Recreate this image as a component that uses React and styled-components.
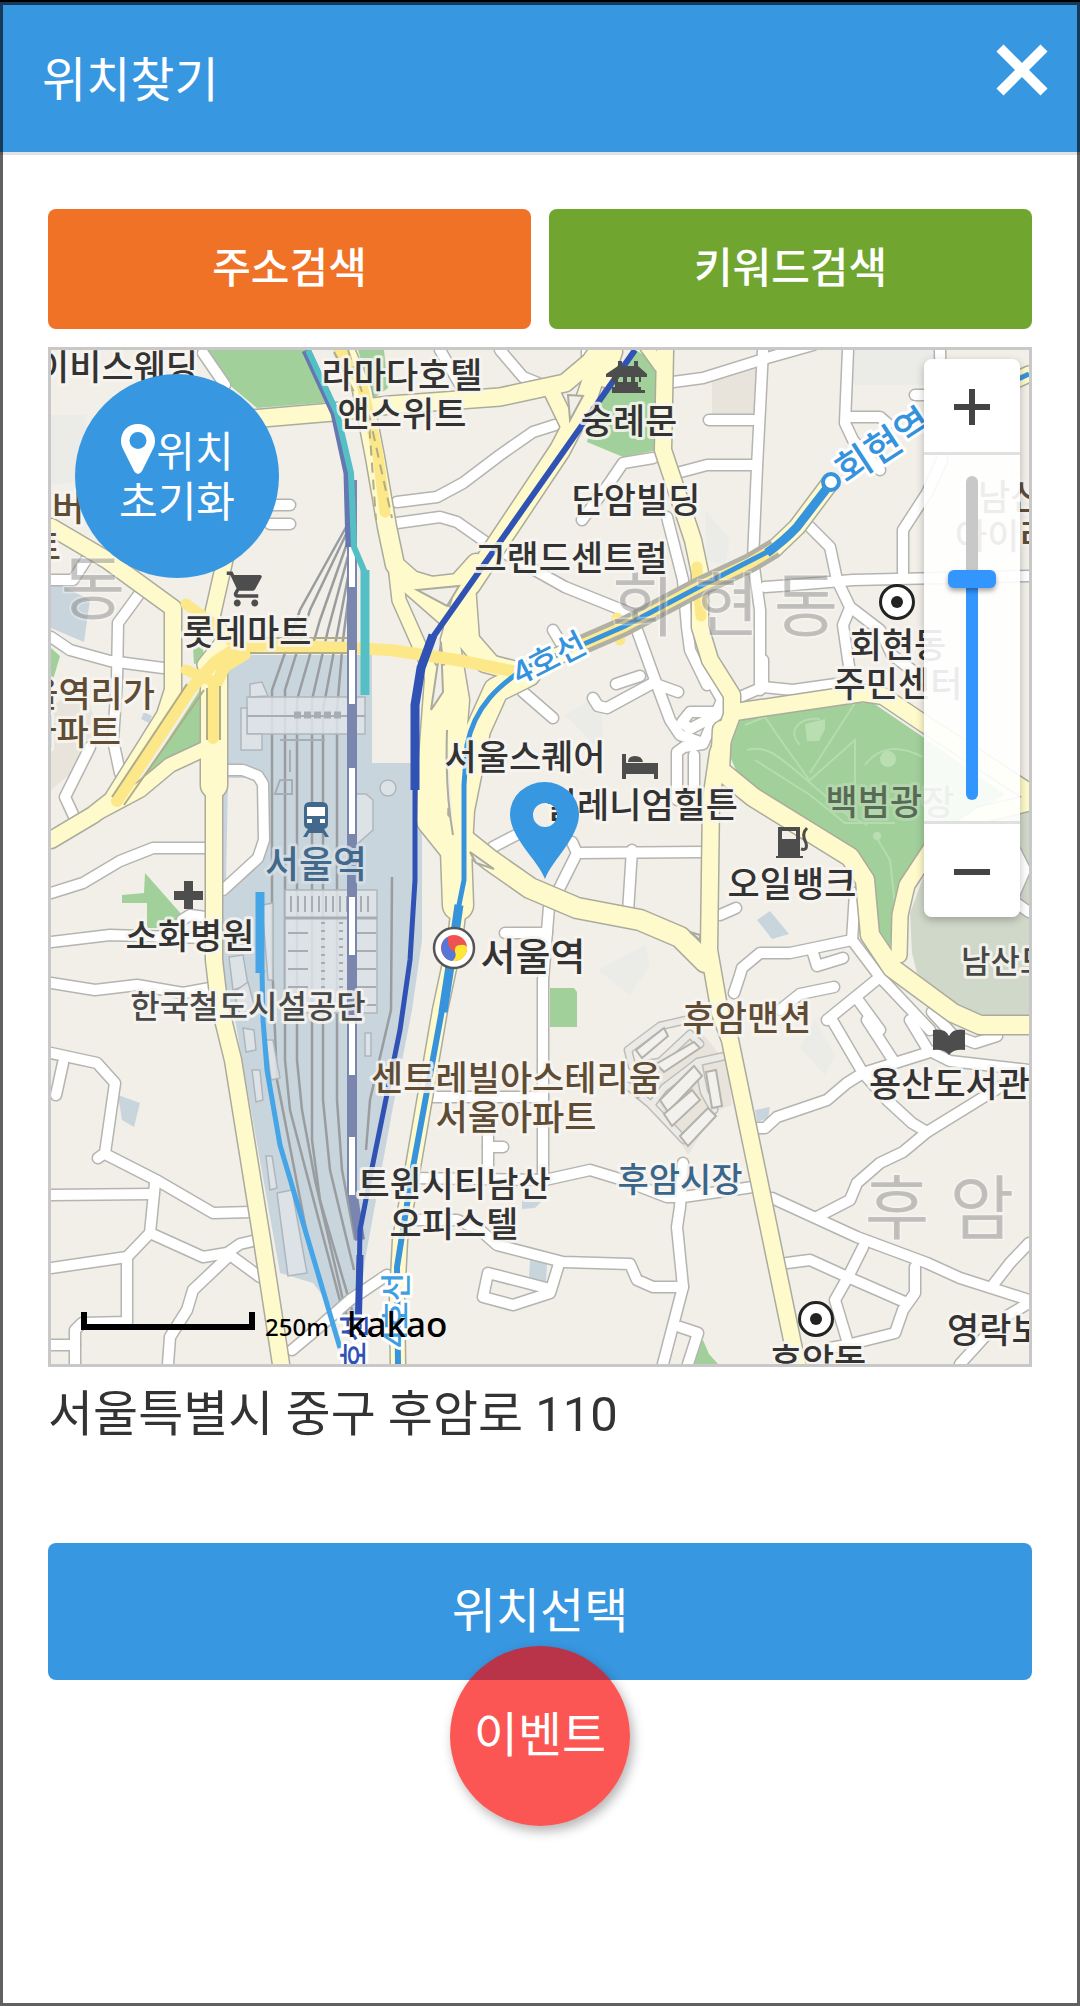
import React, { useState } from "react";
import styled, { createGlobalStyle } from "styled-components";
import { MdShoppingCart } from "react-icons/md";

const GlobalStyle = createGlobalStyle`
  *, *::before, *::after { box-sizing: border-box; }
  body { margin: 0; background: #fff; }
  body, button, input { font-family: Roboto, "Noto Sans CJK KR", sans-serif; }
`;

const Screen = styled.div`
  position: relative;
  min-height: 100vh;
  border-top: 2px solid #000;
  background: #fff;
  color: #333;

  &::after {
    content: "";
    position: absolute;
    inset: 0;
    border: 3px solid rgba(0, 0, 0, 0.62);
    pointer-events: none;
  }
`;

const Header = styled.header`
  display: flex;
  align-items: center;
  justify-content: space-between;
  height: 153px;
  padding: 0 28px 0 42px;
  border-bottom: 3px solid #e2e2e2;
  background: #3897e1;
  color: #fff;
`;

const Title = styled.h1`
  margin: 0;
  padding-top: 8px;
  font-size: 48px;
  line-height: 72px;
  font-weight: 400;
`;

const CloseButton = styled.button`
  display: flex;
  align-self: flex-start;
  margin-top: 38px;
  padding: 0;
  border: 0;
  background: none;
  color: inherit;
  cursor: pointer;
`;

const Content = styled.main`
  display: flex;
  flex-direction: column;
  padding: 54px 48px;
`;

const SearchRow = styled.div`
  display: grid;
  grid-template-columns: 1fr 1fr;
  gap: 18px;
  margin-bottom: 18px;
`;

const ActionButton = styled.button`
  height: ${(p) => (p.$large ? 137 : 120)}px;
  padding: 0 0 10px;
  border: 0;
  border-radius: 8px;
  background: ${(p) => p.$color};
  color: #fff;
  font-size: ${(p) => (p.$large ? 48 : 42)}px;
  font-weight: ${(p) => (p.$large ? 400 : 500)};
  cursor: pointer;
`;

const MapBox = styled.section`
  position: relative;
  overflow: hidden;
  border: 3px solid #c8c8c8;
  background: #f2efe9;
`;

const MapDrawing = styled.svg`
  display: block;
  width: 100%;
  height: auto;
  font-family: "Noto Sans CJK KR", sans-serif;
  font-weight: 500;
`;

const ResetButton = styled.button`
  position: absolute;
  top: 24px;
  left: 24px;
  width: 204px;
  height: 204px;
  padding: 4px 0 0;
  border: 0;
  border-radius: 50%;
  background: #3897e1;
  color: #fff;
  font-size: 42px;
  line-height: 50px;
  cursor: pointer;
`;

const ResetLine = styled.span`
  display: flex;
  align-items: center;
  justify-content: center;
`;

const PinIcon = styled.svg`
  margin: -8px 0 0;
`;

const ZoomPanel = styled.div`
  position: absolute;
  top: 9px;
  right: 9px;
  display: flex;
  flex-direction: column;
  width: 96px;
  border-radius: 8px;
  box-shadow: 0 3px 8px rgba(0, 0, 0, 0.25);
  overflow: hidden;
`;

const ZoomButton = styled.button`
  display: flex;
  align-items: center;
  justify-content: center;
  height: 93px;
  padding: 2px 0 0;
  border: 0;
  background: #fff;
  color: #444;
  cursor: pointer;
`;

const SliderArea = styled.div`
  display: flex;
  justify-content: center;
  padding: 21px 0;
  border: solid #e0e0e0;
  border-width: 3px 0;
  background: rgba(255, 255, 255, 0.9);
`;

const ZoomSlider = styled.input`
  appearance: none;
  writing-mode: vertical-lr;
  direction: rtl;
  width: 48px;
  height: 324px;
  margin: 0;
  background: none;

  &::-webkit-slider-runnable-track {
    width: 12px;
    border-radius: 6px;
    background: linear-gradient(#c8c8c8 ${(p) => p.$empty}%, #3396ff ${(p) => p.$empty}%);
  }

  &::-webkit-slider-thumb {
    appearance: none;
    width: 48px;
    height: 18px;
    margin-left: -18px;
    border-radius: 6px;
    background: #3396ff;
    box-shadow: 0 3px 5px rgba(0, 0, 0, 0.35);
  }
`;

const MapFooter = styled.div`
  position: absolute;
  left: 30px;
  bottom: 10px;
  display: flex;
  align-items: center;
  color: #000;
  font-family: "Noto Sans", sans-serif;
`;

const ScaleBar = styled.span`
  width: 174px;
  height: 18px;
  margin: 0 10px 12px 0;
  border: solid #000;
  border-width: 0 6px 6px;
`;

const ScaleText = styled.span`
  margin-right: 18px;
  font-size: 24px;
  line-height: 48px;
  font-weight: 500;
`;

const Brand = styled.span`
  padding-bottom: 6px;
  font-size: 35px;
  line-height: 48px;
  font-weight: 500;
`;

const Address = styled.p`
  margin: 12px 0 92px;
  font-size: 49px;
  line-height: 72px;
`;

const EventButton = styled.button`
  position: absolute;
  left: calc(50% - 90px);
  bottom: 180px;
  width: 180px;
  height: 180px;
  padding: 0 0 10px;
  border: 0;
  border-radius: 50%;
  background: rgba(249, 4, 0, 0.675);
  box-shadow: 3px 5px 12px rgba(0, 0, 0, 0.3);
  color: #fff;
  font-size: 48px;
  cursor: pointer;
`;

const INK = "#333333";
const BROWN = "#5f4c35";

const parks = [
  "205,350 305,350 333,402 257,408 227,383",
  "358,350 384,350 388,388 374,398 366,376",
  "635,350 650,358 656,374 657,450 623,457 587,442 597,404 607,380",
  "740,720 853,703 873,703 923,737 1005,795 953,823 923,853 897,897 890,947 877,927 875,893 863,870 853,857 753,787 736,770 728,752",
  "145,873 182,915 168,928 147,928 147,903 122,903 122,895 144,893",
  "200,690 200,747 165,765 140,783",
  "550,988 574,988 577,992 577,1027 550,1027",
  "703,1340 709,1354 718,1364 688,1364",
  "51,648 60,656 53,680 51,680",
  "193,648 203,646 204,662 194,664",
];

const streets = [
  "440,350 462,388", "500,350 523,377 545,386", "587,350 587,374",
  "555,425 533,432 500,455 463,483 437,497 397,502",
  "397,523 440,517 457,522 487,543 540,573 565,587 632,614",
  "673,382 703,378 767,358 813,345", "709,420 753,420", "677,473 707,465 753,465",
  "763,350 757,467 753,560 760,610 760,690",
  "653,458 623,463 608,485 582,520",
  "667,517 683,580 687,627 690,650 707,685", "637,630 654,677 670,720 680,735 703,743",
  "553,630 562,645", "593,698 598,706 607,708 653,683 678,692", "616,684 640,676",
  "523,692 553,718", "493,847 520,833", "557,893 577,853 702,852", "572,842 577,853",
  "632,850 628,912", "549,907 543,980 543,1173", "505,933 547,933",
  "677,800 677,752 684,747 703,744 722,700 706,672", "725,712 690,712 682,722 690,729 722,712",
  "694,795 694,755", "848,350 845,423 853,440 880,470", "850,417 880,417 888,424",
  "765,587 793,585 853,580 1029,576", "810,527 830,547 837,580 850,607 880,630 892,655 925,680",
  "903,573 903,530 927,493 942,460 940,350", "850,608 843,625 850,673 848,690",
  "915,395 930,395", "740,697 763,687 793,690 843,683", "763,687 763,660",
  "203,353 225,385", "273,505 290,505", "270,524 290,524",
  "51,580 73,580 88,557", "51,637 70,650 110,661 163,668", "140,593 118,623 117,680 113,740 120,773",
  "90,747 65,797 77,823", "227,770 243,770 258,776 263,784 264,840 258,858 223,890",
  "51,893 83,883 120,861 153,848 205,848", "51,942 110,935 205,938", "182,920 190,915 206,917",
  "51,983 95,990 137,985 183,993 210,988",
  "51,1053 97,1063 115,1083 105,1153 98,1158", "107,1155 158,1181 213,1213 252,1212",
  "63,1063 56,1095", "51,1195 153,1194", "155,1183 150,1233 127,1257 51,1268",
  "150,1233 203,1257 227,1253 240,1244 257,1240", "230,1255 260,1277",
  "230,1255 193,1290 187,1310 170,1337 168,1364", "127,1257 127,1322 82,1323 75,1330 75,1364",
  "51,1345 75,1345", "292,1350 310,1335 350,1300 387,1275",
  "433,1097 543,1097", "488,1130 488,1177", "488,1147 503,1147",
  "410,1178 545,1180 590,1170 623,1180 667,1197 683,1197 760,1186",
  "683,1163 680,1207 677,1227 683,1287 663,1364", "410,1220 457,1220 480,1230 497,1245 563,1262 630,1264 637,1280 653,1287 683,1287",
  "558,1267 550,1293 513,1305 483,1297 488,1273 550,1289", "680,1327 698,1333 688,1364",
  "832,1020 863,1073 847,1083 827,1100 777,1117 765,1128 758,1128", "863,1073 930,1052",
  "867,1020 893,1060", "910,1020 928,1050 950,1061 1029,1070", "932,1012 953,1035 975,1043 997,1036",
  "863,1073 887,1100 912,1123 927,1132", "1000,1087 927,1132 903,1152 880,1163 857,1183 850,1200 817,1217",
  "772,1198 857,1237 927,1263 960,1278 1029,1300", "993,1285 1010,1263 1029,1243",
  "863,1247 848,1277 835,1300 847,1340", "787,1263 810,1260 843,1275 907,1303",
  "915,1267 915,1293 903,1310 895,1333 847,1345 830,1348", "1029,1303 1000,1320 960,1364",
  "734,993 740,975 742,968 760,953 790,953 852,940 855,893", "813,953 817,966 843,958",
  "852,940 880,977 930,1030", "880,977 827,1020", "834,987 800,994 780,1010",
  "858,1000 880,1030", "1015,850 1025,870 1012,900 1029,912", "720,915 736,908",
];

const avenues = [
  { w: 16, d: "51,527 107,560 173,608 173,690 165,715 112,800 93,815 51,840" },
  { w: 14, d: "93,815 140,790 170,765 213,745" },
  { w: 15, d: "226,555 212,617 225,640 205,665" },
  { w: 26, d: "214,672 214,785" },
  { w: 16, d: "214,780 214,960 219,1003 233,1060 262,1240 281,1364" },
  { w: 17, d: "250,419 333,412 390,405 500,397 565,383 590,362 600,348" },
  { w: 18, d: "345,350 362,390 375,457 387,527 395,565 412,580 432,586 458,583 476,563" },
  { w: 15, d: "552,392 568,425" },
  { w: 20, d: "603,350 586,400 560,450 470,585" },
  { w: 14, d: "605,380 615,352" }, { w: 12, d: "645,345 660,366" },
  { w: 13, d: "395,565 399,600 430,670 440,720" },
  { w: 18, d: "466,585 450,640 460,700 452,800" },
  { w: 18, d: "410,585 450,620 485,663 520,672" },
  { w: 18, d: "466,585 470,640 490,663" },
  { w: 30, d: "440,680 434,760 432,820 456,850 458,905" },
  { w: 24, d: "528,674 496,690 478,730 462,810 458,880" },
  { w: 20, d: "455,832 490,860 530,888 577,908 640,920 680,937 705,962" },
  { w: 14, d: "462,880 455,940 440,1010 413,1167 400,1240 397,1300 398,1364" },
  { w: 16, d: "523,672 577,647 623,627 697,588 750,563 775,548 797,527 830,483" },
  { w: 15, d: "950,410 1029,374" },
  { w: 16, d: "665,350 663,450 673,480 693,540 700,573 700,627 710,660 732,695 732,715 718,753 711,800 709,950 720,1013 730,1040 797,1364" },
  { w: 16, d: "735,712 863,693 883,696 923,723 1029,792" },
  { w: 18, d: "722,730 720,770 753,797 850,857 865,880 870,935 892,968 953,1013 980,1025 1029,1025" },
  { w: 15, d: "899,955 900,915 907,885 930,850 980,815 1029,803" },
];

const ramps = [
  { w: 12, d: "117,801 190,690 215,662 235,649 260,645 350,648 390,650 457,660 517,672" },
  { w: 12, d: "213,738 213,690 225,666 245,654" },
  { w: 11, d: "186,604 215,625 230,640" },
  { w: 11, d: "186,670 210,680" },
  { w: 11, d: "340,350 362,385 378,455 385,512" },
  { w: 11, d: "697,567 698,588 701,616" },
  { w: 11, d: "617,618 620,640" },
];

const rails = [
  "350,520 300,610 272,690 272,960 277,1080 310,1250",
  "350,526 310,610 285,690 285,1060 290,1110 345,1320",
  "351,532 320,620 297,700 297,1060 302,1110 315,1180 350,1330",
  "351,545 328,630 312,700 312,1140 320,1200 352,1310",
  "352,556 336,640 323,710 323,1100 330,1170 354,1270",
  "352,570 343,640 337,710 337,1100 342,1170 355,1240",
  "392,877 391,1010 370,1100 366,1150",
];

const yardBuildings = [
  "247,697 365,697 365,734 247,734", "241,708 247,708 247,734 262,734 262,750 241,750",
  "250,684 262,682 268,696 250,697", "285,890 377,890 377,918 285,918",
  "285,918 377,918 377,1013 285,1013", "229,957 243,955 248,985 233,990",
  "234,992 248,982 256,1012 240,1016", "243,1028 254,1030 256,1050 246,1052",
  "252,1070 260,1070 263,1100 256,1102", "266,1040 273,1040 280,1078 271,1080",
  "266,1156 272,1156 277,1188 270,1190", "277,1193 292,1190 307,1273 288,1276",
  "355,794 366,794 373,800 373,830 355,846", "365,1033 371,1033 371,1056 365,1056",
  "262,905 273,903 273,980 268,980",
];

const apartments = [
  "636,1050 664,1028 668,1036 642,1058", "656,1064 694,1042 700,1048 664,1072",
  "660,1100 694,1066 702,1076 668,1112", "664,1114 692,1090 700,1100 672,1126",
  "680,1136 708,1108 716,1116 688,1146", "706,1072 716,1070 722,1106 712,1108",
  "632,1082 646,1072 650,1082 638,1098",
];

const apartmentLanes = [
  "628,1086 650,1104 684,1140 690,1134", "632,1066 628,1050 660,1026 686,1020",
  "632,1066 660,1062 690,1034 700,1044", "652,1104 664,1088 698,1062 725,1056",
  "698,1062 704,1092 714,1110",
];

const whiteTicks = [[547, 40], [650, 54], [768, 66], [897, 58], [1020, 55], [1137, 58]];

const labels = [
  { t: "이비스웨딩", x: 198, y: 380, a: "end" },
  { t: "라마다호텔", x: 402, y: 388 }, { t: "앤스위트", x: 402, y: 427 },
  { t: "숭례문", x: 629, y: 434 }, { t: "단암빌딩", x: 636, y: 513 },
  { t: "그랜드센트럴", x: 571, y: 571 }, { t: "롯데마트", x: 247, y: 645 },
  { t: "회현동", x: 898, y: 658 }, { t: "주민센터", x: 898, y: 697 },
  { t: "남산롯데캐슬", x: 978, y: 510, a: "start", c: BROWN },
  { t: "아이리스", x: 955, y: 549, a: "start", c: BROWN },
  { t: "버", x: 52, y: 521, a: "start", c: BROWN }, { t: "트", x: 61, y: 560, a: "end", c: BROWN },
  { t: "서울역리가", x: 155, y: 707, a: "end", c: BROWN }, { t: "아파트", x: 121, y: 745, a: "end", c: BROWN },
  { t: "백범광장", x: 890, y: 815, c: "#586a56", h: "#b7d9b0" },
  { t: "서울스퀘어", x: 525, y: 770 }, { t: "밀레니엄힐튼", x: 738, y: 818, a: "end" },
  { t: "오일뱅크", x: 792, y: 897 }, { t: "남산도서관", x: 961, y: 973, a: "start", c: "#484848", s: 32 },
  { t: "서울역", x: 316, y: 878, c: "#42698c", h: "#d8e0e6", s: 37 },
  { t: "소화병원", x: 190, y: 949 }, { t: "한국철도시설공단", x: 248, y: 1018, c: "#484848", s: 32 },
  { t: "서울역", x: 533, y: 970, s: 38 }, { t: "후암맨션", x: 747, y: 1031, c: BROWN },
  { t: "센트레빌아스테리움", x: 516, y: 1091, c: BROWN }, { t: "서울아파트", x: 516, y: 1130, c: BROWN },
  { t: "트윈시티남산", x: 454, y: 1197 }, { t: "오피스텔", x: 454, y: 1237 },
  { t: "후암시장", x: 680, y: 1192, c: "#39668a", s: 34 },
  { t: "용산도서관", x: 869, y: 1097, a: "start" }, { t: "후암동", x: 818, y: 1374 },
  { t: "영락보린원", x: 947, y: 1343, a: "start" },
];

const districts = [["동", 93, 614], ["회", 643, 631], ["현", 727, 631], ["동", 806, 631], ["후", 897, 1234], ["암", 982, 1234]];

const lineLabels = [
  { t: "4호선", x: 549, y: 658, r: -27, c: "#3592dc", s: 32 },
  { t: "회현역", x: 884, y: 447, r: -33, c: "#3592dc", s: 38 },
  { t: "4호선", x: 395, y: 1310, r: -90, c: "#3f9fe0", s: 31 },
  { t: "1호선", x: 353, y: 1350, r: -90, c: "#2f52b4", s: 30 },
];

function Roads({ items, edge, fill, width }) {
  const norm = items.map((r) => (typeof r === "string" ? { d: r, w: width } : r));
  return (
    <g fill="none" strokeLinecap="round" strokeLinejoin="round">
      {norm.map((r, i) => edge && <polyline key={"e" + i} points={r.d} stroke={edge} strokeWidth={r.w + 3} />)}
      {norm.map((r, i) => <polyline key={i} points={r.d} stroke={fill} strokeWidth={r.w} />)}
    </g>
  );
}

function OfficeMark({ x, y }) {
  return (
    <g>
      <circle cx={x} cy={y} r="16.5" fill="#fff" stroke="#222" strokeWidth="3" />
      <circle cx={x} cy={y} r="6" fill="#222" />
    </g>
  );
}

function CityMap() {
  return (
    <MapDrawing viewBox="51 350 978 1014" role="img" aria-label="서울역 주변 지도">
      <rect x="51" y="350" width="978" height="1014" fill="#f2efe9" />
      <g fill="#ebece7">
        <polygon points="51,415 85,415 90,480 51,485" />
        <polygon points="850,350 940,350 925,385 852,385" />
        <polygon points="565,715 600,695 605,755" />
        <polygon points="815,1020 835,1055 825,1075 800,1048" />
        <polygon points="598,970 645,945 650,965 630,995" />
        <polygon points="705,510 730,540 725,565 707,560" />
      </g>
      <g fill="#e8e4dc">
        <polygon points="712,380 757,368 755,416 712,414" />
        <polygon points="51,705 85,690 100,735 75,770 51,790" />
        <polygon points="640,1070 700,1030 728,1065 732,1105 714,1112 688,1155" />
      </g>
      <g fill="#c9d5dd">
        <polygon points="235,655 352,655 372,655 372,763 422,763 422,940 412,1010 393,1107 365,1260 358,1320 340,1318 313,1283 280,1273 235,1020 223,990 223,670" />
        <polygon points="51,580 90,600 84,642 51,628" />
        <polygon points="118,1095 140,1103 134,1127 122,1120" />
        <polygon points="757,920 770,911 789,934 772,939" />
        <polygon points="530,1260 547,1264 546,1282 529,1278" />
        <polygon points="522,1200 543,1200 535,1208 522,1209" />
        <polygon points="755,1110 770,1107 768,1118 757,1122" />
        <polygon points="144,712 152,716 149,723 141,719" />
      </g>
      <polygon fill="#f2efe9" points="228,778 260,778 262,850 226,886" />
      <polygon fill="#d0d8c9" points="923,878 910,913 912,953 917,973 967,1013 1029,1020 1029,812 985,820 935,858" />
      <g fill="#a1d09a">{parks.map((p) => <polygon key={p} points={p} />)}</g>
      <g fill="none" stroke="#b5dcae" strokeWidth="2">
        <path d="M745 725l20-8 15 22 30 42M855 703l-45 70M747 750c20-5 30 5 60 30l40 35 20 10M800 745c-14-15 0-28 20-26M810 780l45-40v60M865 765c15-20 35-20 58-8M875 835l15 25 5 45" />
        <path d="M755 760l55 35 35 28h50" />
      </g>
      <g fill="#b9deb2"><circle cx="888" cy="759" r="8" /><circle cx="877" cy="836" r="4" /><path d="M805 724l20-5v10l-6 12h-12z" /></g>

      <g fill="none" stroke="#999d9f" strokeWidth="2.5">{rails.map((r) => <polyline key={r} points={r} />)}</g>
      <g fill="#dfe4e8" fillOpacity="0.85" stroke="#aeb6bd" strokeWidth="1.5">
        {yardBuildings.map((b) => <polygon key={b} points={b} />)}
        <circle cx="388" cy="788" r="8" />
      </g>
      <g fill="none" stroke="#a7adb3">
        <path strokeWidth="16" strokeDasharray="2 5" d="M290 904h82" />
        <path strokeWidth="3" d="M285 918h92" />
        <path strokeWidth="20" strokeDasharray="2 16" d="M298 932v78M366 932v78" />
        <path strokeWidth="4" strokeDasharray="2 6" d="M323 922v86M341 922v86" />
        <path strokeWidth="7" strokeDasharray="7 3" d="M294 715h50" />
        <path strokeWidth="2" d="M247 716h118M280 740h45M280 780h12v14h-17zM290 750v22" />
      </g>

      <Roads items={streets} edge="#b4b4b1" fill="#ffffff" width={10} />
      <Roads items={apartmentLanes} edge="#bdbdb8" fill="#eceae6" width={6} />
      <g fill="#f3f1ed" stroke="#b4b2ac" strokeWidth="2">{apartments.map((b) => <polygon key={b} points={b} />)}</g>
      <Roads items={avenues} edge="#abab9e" fill="#fefacb" />
      <g fill="none" stroke="#abab9e" strokeWidth="2">
        <path d="M447 730q-2 60 6 105M470 852l24 17-18-6zM441 642l-10 68 12-18zM690 932l10 8v-5z" fill="#f2efe9" />
        <path d="M568 395l15 1-13 24zM417 590l42-4-12 20z" fill="#f2efe9" />
      </g>
      <Roads items={ramps} fill="#fde889" />
      <g fill="none" stroke="#b0ac85" strokeWidth="2">
        <path d="M112 797l75-113M124 805l80-115M207 740v-52M220 740v-54M250 653h100M250 638h100" />
        <path strokeDasharray="10 7" d="M348 350l20 60 24 108M334 352l35 70 7 98" />
      </g>
      <g fill="none" stroke="#b1b0a4" strokeWidth="2">
        <path strokeWidth="20" d="M577 647l46-20 74-39 53-25 25-15" />
        <path stroke="#fde98f" strokeWidth="11" d="M577 647l46-20 74-39 53-25 25-15" />
      </g>

      <polyline points="352,480 352,1190 360,1240" fill="none" stroke="#7b86ae" strokeWidth="10" />
      <g fill="#fff">{whiteTicks.map(([y, h]) => <rect key={y} x="349" y={y} width="6" height={h} />)}</g>
      <g fill="none" strokeLinejoin="round">
        <polyline points="306,350 335,413 348,473 350,547" stroke="#6577b0" strokeWidth="9" />
        <polyline points="308,350 337,413 351,473 354,547 365,573" stroke="#54bfc5" strokeWidth="6" />
        <polyline points="365,570 365,695" stroke="#54bfc5" strokeWidth="9" />
        <g stroke="#2f52b4">
          <polyline points="635,350 433,637" strokeWidth="6" />
          <polyline points="433,635 421,668 415,705 415,790" strokeWidth="9" />
          <polyline points="415,790 415,880 410,960 400,1030 373,1163 360,1230 358,1335" strokeWidth="5" />
          <polyline points="360,1255 358,1335" strokeWidth="7" />
        </g>
        <g stroke="#3794dc">
          <path d="M1029 374L950 410M775 548L697 588 623 627 577 647 525 668C500 685 475 705 467 745L464 785 464 880 458 910" strokeWidth="5" />
          <path d="M831 483L797 527Q785 540 767 553" strokeWidth="9" />
          <path d="M459 905L454 940 443 1012" strokeWidth="9" />
          <path d="M442 1010L413 1167 397 1267 398 1364" strokeWidth="6" />
        </g>
        <g stroke="#46a5e6">
          <path d="M260 892V973" strokeWidth="9" />
          <path d="M262 970L263 1020 267 1070 280 1145 340 1348" strokeWidth="5" />
        </g>
      </g>
      <circle cx="831" cy="482" r="8" fill="#fff" stroke="#3794dc" strokeWidth="4" />

      <g fill="#777" fillOpacity="0.42" stroke="#fff" strokeOpacity="0.35" strokeWidth="3" paintOrder="stroke" textAnchor="middle" fontSize="70" fontWeight="400">
        {districts.map(([t, x, y]) => <text key={t + x} x={x} y={y}>{t}</text>)}
      </g>
      <g strokeWidth="6" strokeLinejoin="round" paintOrder="stroke">
        {labels.map((l) => (
          <text key={l.t + l.y} x={l.x} y={l.y} textAnchor={l.a || "middle"} fontSize={l.s || 35} fill={l.c || INK} stroke={l.h || "#f8f6f1"} strokeOpacity="0.85">
            {l.t}
          </text>
        ))}
        {lineLabels.map((l) => (
          <text key={l.t + l.x} transform={`translate(${l.x} ${l.y}) rotate(${l.r})`} y={12} textAnchor="middle" fontSize={l.s} fill={l.c} stroke="#fff">
            {l.t}
          </text>
        ))}
      </g>

      <MdShoppingCart x="225" y="568" size={42} color="#4d4d4d" />
      <g fill="#4d4d4d">
        <path d="M184 881h9v10h10v9h-10v9h-9v-9h-10v-9h10z" />
        <path d="M778 827h22v29h3v2h-27v-2h2zM782 831v8h14v-8z" fillRule="evenodd" />
        <path d="M801 849q7 2 5-6-5-9 1-15" fill="none" stroke="#4d4d4d" strokeWidth="3" />
        <path d="M622 754h4v9h32v16h-4v-5h-28v5h-4z" />
        <path d="M628 762q0-6 7-6t8 6z" />
        <path d="M618 361h4v5h12v-5h4v5l9 8v3h-6v5h-3v5h3v4h-29v-4h3v-5h-3v-5h-6v-3l12-8zM618 377v5h5v-5zm9 0v5h4v-5zm8 0v5h4v-5z" fillRule="evenodd" />
        <path d="M612 393h33v-3h-5q-11-10-23 0h-5z" />
        <path d="M933 1030q12-2 16 6 4-8 16-6v20q-12-1-16 5-4-6-16-5z" />
      </g>
      <g fill="#42698c">
        <path d="M310 802h12q6 0 6 6v16q0 4-4 5l5 8h-4l-2-4h-14l-2 4h-4l5-8q-4-1-4-5v-16q0-6 6-6z" />
        <path fill="#fff" d="M307 807h18v9h-18zM307 819h5v4h-5zM320 819h5v4h-5z" />
      </g>
      <OfficeMark x={897} y={602} />
      <OfficeMark x={816} y={1319} />

      <circle cx="454" cy="948" r="20" fill="#fff" stroke="#555" strokeWidth="2.5" />
      <circle cx="454" cy="948" r="13" fill="#f05252" />
      <path d="M467 947A13 13 0 0 1 452 961Q457 957 455 952 454 945 460 945 465 944 467 947Z" fill="#ffe736" />
      <path d="M448 937A13 13 0 0 0 452 961Q457 957 455 952 447 950 448 937Z" fill="#5577d8" />

      <path
        fill="#3897e1"
        fillRule="evenodd"
        d="M545 879C538 860 510 838 510 814A34.500 32 0 0 1 579 814C579 838 552 860 545 879ZM545 803a12 12 0 1 0 0 24 12 12 0 1 0 0-24Z"
      />
    </MapDrawing>
  );
}

export default function App() {
  const [level, setLevel] = useState(9);
  const change = (step) => setLevel((v) => Math.min(13, Math.max(0, v + step)));

  return (
    <>
      <GlobalStyle />
      <Screen>
        <Header>
          <Title>위치찾기</Title>
          <CloseButton type="button" aria-label="닫기">
            <svg width="60" height="60" viewBox="0 0 60 60">
              <path d="M8 8L52 52M52 8L8 52" stroke="currentColor" strokeWidth="10" />
            </svg>
          </CloseButton>
        </Header>
        <Content>
          <SearchRow>
            <ActionButton type="button" $color="#f07226">주소검색</ActionButton>
            <ActionButton type="button" $color="#70a62f">키워드검색</ActionButton>
          </SearchRow>
          <MapBox>
            <CityMap />
            <ResetButton type="button">
              <ResetLine>
                <PinIcon width="36" height="52" viewBox="0 0 36 52" aria-hidden="true">
                  <path fill="#fff" fillRule="evenodd" d="M18 1C8 1 1 8 1 18c0 4 1 6 3 10l10 20q4 6 8 0l10-20c2-4 3-6 3-10C35 8 28 1 18 1zm0 8a8.500 8.500 0 1 1 0 17 8.500 8.500 0 0 1 0-17z" />
                </PinIcon>
                위치
              </ResetLine>
              <ResetLine>초기화</ResetLine>
            </ResetButton>
            <ZoomPanel>
              <ZoomButton type="button" aria-label="확대" onClick={() => change(1)}>
                <svg width="36" height="36" viewBox="0 0 36 36">
                  <path d="M18 0V36M0 18H36" stroke="currentColor" strokeWidth="6" />
                </svg>
              </ZoomButton>
              <SliderArea>
                <ZoomSlider
                  type="range"
                  aria-label="지도 확대 단계"
                  min="0"
                  max="13"
                  value={level}
                  $empty={100 - (level / 13) * 100}
                  onChange={(e) => setLevel(Number(e.target.value))}
                />
              </SliderArea>
              <ZoomButton type="button" aria-label="축소" onClick={() => change(-1)}>
                <svg width="36" height="36" viewBox="0 0 36 36">
                  <path d="M0 18H36" stroke="currentColor" strokeWidth="6" />
                </svg>
              </ZoomButton>
            </ZoomPanel>
            <MapFooter>
              <ScaleBar />
              <ScaleText>250m</ScaleText>
              <Brand>kakao</Brand>
            </MapFooter>
          </MapBox>
          <Address>서울특별시 중구 후암로 110</Address>
          <ActionButton type="button" $color="#3897e1" $large>위치선택</ActionButton>
        </Content>
        <EventButton type="button">이벤트</EventButton>
      </Screen>
    </>
  );
}
